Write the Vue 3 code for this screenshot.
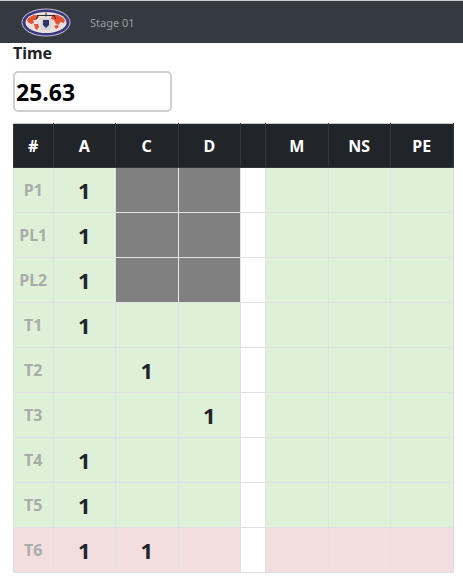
<script setup>
const columns = ['A', 'C', 'D', '', 'M', 'NS', 'PE']

const rows = [
  { name: 'P1', marks: { A: 1 }, disabled: true },
  { name: 'PL1', marks: { A: 1 }, disabled: true },
  { name: 'PL2', marks: { A: 1 }, disabled: true },
  { name: 'T1', marks: { A: 1 } },
  { name: 'T2', marks: { C: 1 } },
  { name: 'T3', marks: { D: 1 } },
  { name: 'T4', marks: { A: 1 } },
  { name: 'T5', marks: { A: 1 } },
  { name: 'T6', marks: { A: 1, C: 1 }, bad: true },
]

function cellClass(row, col) {
  if (col === '') return 'gap'
  if (row.disabled && (col === 'C' || col === 'D')) return 'off'
  return ''
}
</script>

<template>
  <div class="page">
    <nav class="navbar">
      <svg class="logo" width="50" height="29" viewBox="0 0 50 29" aria-hidden="true">
        <ellipse cx="25" cy="14.5" rx="24.5" ry="14" fill="#bdb9d2" />
        <ellipse cx="25" cy="14.5" rx="23.5" ry="13" fill="#3a3780" />
        <ellipse cx="25" cy="14.5" rx="20.5" ry="10.5" fill="#e9dfdc" />
        <path d="M6 12c2-3 5-5 9-5l3 2-3 3-3 0 1 3-3 1-3-2z" fill="#e4512f" />
        <path d="M13 16l4 0 1 3-2 3-2-2z" fill="#e4512f" />
        <path d="M31 7c5-1 10 1 13 5l-1 3-4-1-1 3-3-1-2-4-3-1z" fill="#e4512f" />
        <path d="M33 18l3-1 2 2-3 2z" fill="#e4512f" />
        <path d="M16 7.5h18M25 4.5v4M17 8l-2 3M33 8l2 3" stroke="#2e2830" stroke-width="1" fill="none" />
        <path d="M20 10h10v12h-10z" fill="#d8d4d6" />
        <path d="M22 12h6v5l-3 3-3-3z" fill="#2b3568" />
      </svg>
      <span class="stage">Stage 01</span>
    </nav>

    <label class="time-label" for="time">Time</label>
    <input id="time" class="time-input" type="text" value="25.63" />

    <table class="score">
      <colgroup>
        <col class="c-name" />
        <col class="c-wide" />
        <col class="c-wide" />
        <col class="c-wide" />
        <col class="c-gap" />
        <col class="c-wide" />
        <col class="c-wide" />
        <col class="c-wide" />
      </colgroup>
      <thead>
        <tr>
          <th>#</th>
          <th v-for="col in columns" :key="col">{{ col }}</th>
        </tr>
      </thead>
      <tbody>
        <tr v-for="row in rows" :key="row.name" :class="row.bad ? 'bad' : 'good'">
          <td class="name">{{ row.name }}</td>
          <td v-for="col in columns" :key="col" :class="cellClass(row, col)">{{ row.marks[col] }}</td>
        </tr>
      </tbody>
    </table>
  </div>
</template>

<style>
body {
  background: #fff;
}
</style>

<style scoped>
.page {
  width: 463px;
  height: 580px;
  overflow: hidden;
  font-family: "Noto Sans", "Open Sans", sans-serif;
  color: #212529;
}

.navbar {
  height: 42px;
  border-top: 1px solid #c9cbcd;
  background: #343a40;
  display: flex;
  align-items: center;
  padding-left: 21px;
}

.logo {
  display: block;
}

.stage {
  margin-left: 19px;
  font-size: 11px;
  color: #9a9da0;
}

.time-label {
  display: block;
  margin: 0 0 0 13px;
  font-size: 16px;
  line-height: 21px;
  font-weight: 700;
}

.time-input {
  display: block;
  box-sizing: border-box;
  width: 159px;
  height: 41px;
  margin: 7px 0 11px 13px;
  padding: 0 1px;
  border: 2px solid #ced0d2;
  border-radius: 5px;
  outline: none;
  background: #fff;
  font-family: inherit;
  font-size: 23px;
  font-weight: 700;
  color: #000;
}

.score {
  margin-left: 13px;
  width: 440px;
  table-layout: fixed;
  border-collapse: collapse;
}

.c-name {
  width: 39.5px;
}

.c-wide {
  width: 62.5px;
}

.c-gap {
  width: 25px;
}

th {
  height: 43px;
  padding: 0;
  background: #212529;
  border: 1px solid #32383e;
  border-top-color: #c9cbcd;
  color: #fff;
  font-size: 16px;
  font-weight: 700;
  text-align: center;
}

td {
  height: 45px;
  box-sizing: border-box;
  padding: 0 0 1px;
  border: 1px solid #dee2e6;
  font-size: 22px;
  font-weight: 700;
  text-align: center;
  color: #212529;
}

.good td {
  background: #dff0d8;
}

.bad td {
  background: #f2dede;
}

td.name {
  padding: 0;
  font-size: 16px;
  font-weight: 700;
  color: #a9aca8;
}

.good td.off,
.bad td.off {
  background: #808080;
  border-color: #e6e6e6;
}

.good td.gap,
.bad td.gap {
  background: #fff;
}
</style>
